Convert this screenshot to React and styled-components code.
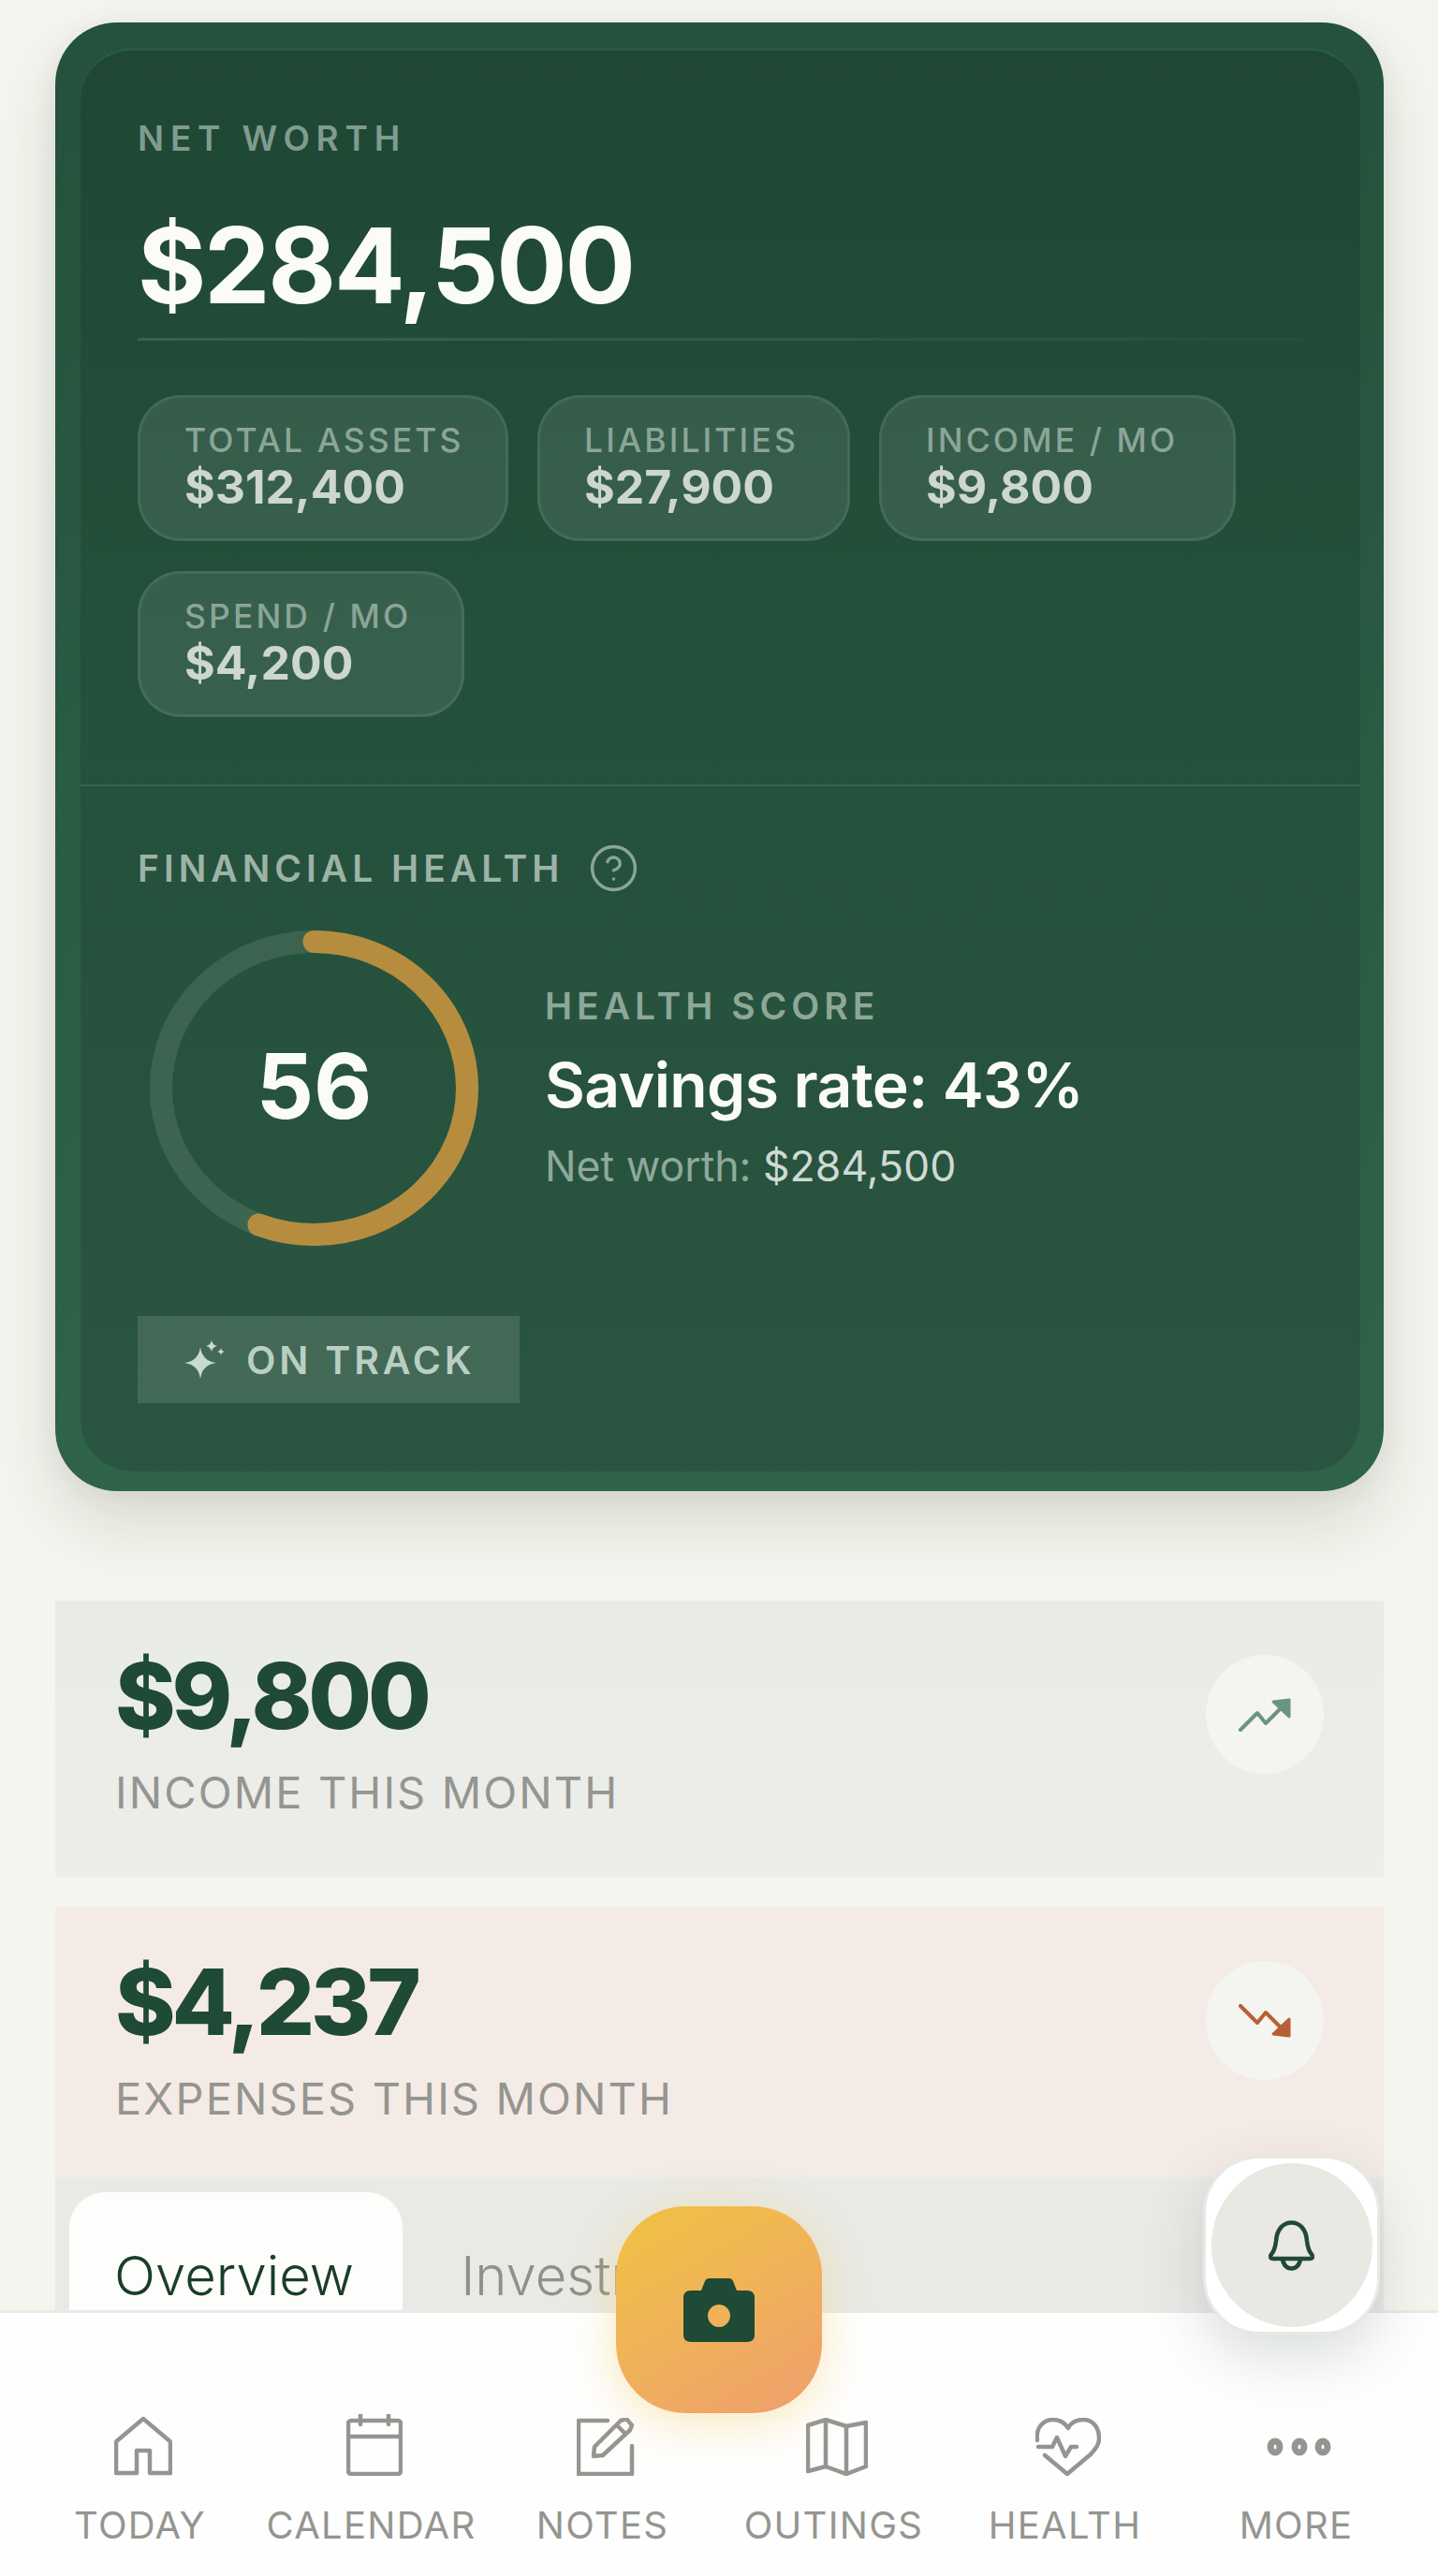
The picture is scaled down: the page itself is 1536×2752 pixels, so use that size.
import React from "react";
import styled, { createGlobalStyle } from "styled-components";
import { CircleHelp } from "lucide-react";

const GlobalStyle = createGlobalStyle`
	html, body {
		margin: 0;
		padding: 0;
		background: #f5f5ef;
	}
	* {
		box-sizing: border-box;
	}
`;

const Page = styled.div`
	position: relative;
	width: 1536px;
	height: 2752px;
	overflow: hidden;
	padding: 24px 58px 0 59px;
	background: #f5f5ef;
	font-family: Inter, "Liberation Sans", sans-serif;
`;

const HeroCard = styled.section`
	border-radius: 66px;
	padding: 27px 25px 21px 27px;
	background: linear-gradient(180deg, #24523c 0%, #2f634a 100%);
	box-shadow: 0 34px 70px rgba(40, 40, 30, 0.13), 0 4px 30px rgba(40, 40, 30, 0.06);
`;

const InnerPanel = styled.div`
	border-radius: 56px;
	border-top: 3px solid #2a5a43;
	background: linear-gradient(180deg, #1f4734 0%, #23503a 40%, #27533e 70%, #2a5540 100%);
`;

const SummaryBlock = styled.div`
	padding: 71px 63px 72px 61px;
`;

const Overline = styled.div`
	font-size: 37px;
	line-height: 46px;
	font-weight: 600;
	letter-spacing: 6.8px;
	color: #7f9c8e;
`;

const NetWorth = styled.div`
	margin-top: 47px;
	font-size: 112px;
	line-height: 130px;
	font-weight: 750;
	letter-spacing: -2.3px;
	color: #fbfcf9;
`;

const Rule = styled.div`
	height: 3px;
	margin-top: 13px;
	background: linear-gradient(90deg, #346450 0%, #2c5a45 60%, #274f3c 100%);
`;

const ChipWrap = styled.div`
	display: flex;
	flex-wrap: wrap;
	gap: 32px 31px;
	margin-top: 58px;
`;

const Chip = styled.div`
	display: flex;
	flex-direction: column;
	justify-content: center;
	width: ${({ $width }) => $width}px;
	height: 156px;
	padding: 0 0 0 47px;
	border: 3px solid rgba(255, 255, 255, 0.075);
	border-radius: 46px;
	background: rgba(255, 255, 255, 0.095);
`;

const ChipLabel = styled.div`
	font-size: 35.5px;
	line-height: 40px;
	font-weight: 500;
	letter-spacing: 3.1px;
	color: #8ba598;
	white-space: nowrap;
`;

const ChipValue = styled.div`
	font-size: 50px;
	line-height: 58px;
	font-weight: 700;
	color: #cdd6d0;
	white-space: nowrap;
`;

const HealthBlock = styled.div`
	padding: 64px 61px 73px 61px;
	border-top: 2px solid #35634d;
`;

const HealthHeading = styled.div`
	display: flex;
	align-items: center;
	gap: 26px;
	height: 46px;
	font-size: 39px;
	font-weight: 600;
	letter-spacing: 5px;
	color: #9db3a7;
	svg {
		color: #8ba598;
	}
`;

const ScoreRow = styled.div`
	display: flex;
	align-items: center;
	gap: 71px;
	margin: 44px 0 0 13px;
`;

const RingWrap = styled.div`
	position: relative;
	flex: none;
	width: 351px;
	height: 337px;
`;

const RingValue = styled.div`
	position: absolute;
	inset: 0;
	display: flex;
	align-items: center;
	justify-content: center;
	padding-bottom: 5px;
	font-size: 96px;
	font-weight: 700;
	color: #fbfcf9;
`;

const ScoreText = styled.div`
	display: flex;
	flex-direction: column;
	padding-top: 3px;
`;

const ScoreLabel = styled.div`
	font-size: 39px;
	line-height: 46px;
	font-weight: 600;
	letter-spacing: 5px;
	color: #8da798;
`;

const ScoreTitle = styled.div`
	margin-top: 16px;
	font-size: 66px;
	line-height: 90px;
	font-weight: 600;
	letter-spacing: -0.6px;
	color: #fbfcf9;
`;

const ScoreNote = styled.div`
	margin-top: 12px;
	font-size: 44.6px;
	line-height: 60px;
	font-weight: 400;
	color: #8fa99c;
	b {
		font-weight: 400;
		color: #cfdad3;
	}
`;

const TrackBadge = styled.div`
	display: inline-flex;
	align-items: center;
	gap: 22px;
	width: 408px;
	height: 93px;
	margin-top: 75px;
	padding: 0 0 0 50px;
	background: rgba(255, 255, 255, 0.12);
	font-size: 41px;
	font-weight: 600;
	letter-spacing: 3.8px;
	color: #b9cfc3;
`;

const StatCard = styled.section`
	display: flex;
	justify-content: space-between;
	align-items: flex-start;
	height: ${({ $height }) => $height}px;
	margin-top: ${({ $gap }) => $gap}px;
	padding: 42px 64px 0 64px;
	background: ${({ $tint }) => $tint};
`;

const StatValue = styled.div`
	font-size: 98px;
	line-height: 120px;
	font-weight: 760;
	letter-spacing: -4.2px;
	color: #1f4a35;
`;

const StatLabel = styled.div`
	margin-top: 13px;
	font-size: 47px;
	line-height: 60px;
	font-weight: 400;
	letter-spacing: 2.1px;
	color: #959590;
`;

const StatIcon = styled.div`
	display: flex;
	align-items: center;
	justify-content: center;
	width: 126px;
	height: 127px;
	margin-top: 16px;
	border-radius: 50%;
	background: #f4f4f0;
`;

const TabBar = styled.div`
	display: flex;
	gap: 14px;
	height: 160px;
	padding: 16px 0 0 15px;
	background: #e9eae6;
`;

const Tab = styled.div`
	height: 160px;
	padding: 53px 52px 0 48px;
	border-radius: 38px 38px 0 0;
	background: ${({ $active }) => ($active ? "#fdfdfc" : "transparent")};
	font-size: 58px;
	line-height: 72px;
	font-weight: 300;
	color: ${({ $active }) => ($active ? "#1a3c2c" : "#8f8f8b")};
`;

const BottomNav = styled.nav`
	position: absolute;
	left: 0;
	right: 0;
	bottom: 0;
	display: grid;
	grid-template-columns: repeat(6, 247px);
	height: 284px;
	padding: 106px 0 0 26px;
	border-top: 3px solid #e9e9e6;
	background: #fefefe;
`;

const NavItem = styled.div`
	display: flex;
	flex-direction: column;
	align-items: center;
	color: #959590;
`;

const NavIconBox = styled.div`
	display: flex;
	align-items: flex-end;
	justify-content: center;
	height: 68px;
	margin-left: 6px;
`;

const NavLabel = styled.div`
	margin-top: 28px;
	font-size: 40px;
	line-height: 50px;
	font-weight: 400;
	letter-spacing: 1.3px;
`;

const CameraButton = styled.button`
	position: absolute;
	left: 658px;
	top: 2357px;
	display: flex;
	align-items: center;
	justify-content: center;
	width: 220px;
	height: 221px;
	padding: 0;
	border: 0;
	border-radius: 74px;
	background: linear-gradient(150deg, #f1c243 0%, #f0b259 50%, #ef9e6e 100%);
	box-shadow: 0 10px 50px rgba(245, 200, 90, 0.4);
`;

const BellFrame = styled.button`
	position: absolute;
	left: 1285px;
	top: 2303px;
	display: flex;
	align-items: center;
	justify-content: center;
	width: 189px;
	height: 191px;
	padding: 0;
	border: 3px solid #e8e8e4;
	border-radius: 60px;
	background: #fff;
	box-shadow: 0 24px 60px rgba(60, 75, 85, 0.18);
`;

const BellDisc = styled.div`
	display: flex;
	align-items: center;
	justify-content: center;
	width: 172px;
	height: 175px;
	border-radius: 50%;
	background: #e9e8e2;
`;

function ScoreRing({ value }) {
	return (
		<RingWrap>
			<svg width="351" height="337" viewBox="0 0 351 337" fill="none">
				<ellipse cx="175.5" cy="168.5" rx="163.5" ry="156.5" stroke="rgba(255,255,255,0.1)" strokeWidth="24" />
				<path
					d="M175.5 12A163.5 156.5 0 0 1 175.5 325A163.5 156.5 0 0 1 175.5 12"
					pathLength="100"
					stroke="#b68d3f"
					strokeWidth="24"
					strokeLinecap="round"
					strokeDasharray={`${value} 100`}
				/>
			</svg>
			<RingValue>{value}</RingValue>
		</RingWrap>
	);
}

const Sparkle = () => (
	<svg width="44" height="42" viewBox="0 0 44 42" fill="#c9dad0">
		<path d="M17 7Q19 22 34 24Q19 26 17 41Q15 26 0 24Q15 22 17 7Z" />
		<path d="M29 0Q30 5 35 6Q30 7 29 12Q28 7 23 6Q28 5 29 0Z" />
		<path d="M39 8Q39.500 11.500 43 12Q39.500 12.500 39 16Q38.500 12.500 35 12Q38.500 11.500 39 8Z" />
	</svg>
);

const TrendIcon = ({ color, down }) => (
	<svg width="56" height="36" viewBox="0 0 56 36" fill="none" style={down ? { transform: "scaleY(-1)" } : undefined}>
		<path d="M2 34L20 16L29 27L45 11" stroke={color} strokeWidth="4" strokeLinecap="round" strokeLinejoin="round" />
		<path d="M37 4L54 2V20Z" fill={color} stroke={color} strokeWidth="3" strokeLinejoin="round" />
	</svg>
);

const CameraGlyph = () => (
	<svg width="76" height="68" viewBox="0 0 76 68">
		<path
			fillRule="evenodd"
			fill="#1f4a35"
			d="M8 13H19L23 3Q24 0 28 0H48Q52 0 53 3L57 13H68Q76 13 76 21V60Q76 68 68 68H8Q0 68 0 60V21Q0 13 8 13ZM38 28A12 12 0 1 0 38.010 28Z"
		/>
	</svg>
);

const BellGlyph = () => (
	<svg width="49" height="54" viewBox="0 0 49 54" fill="none" stroke="#1f4a35" strokeWidth="4.500" strokeLinejoin="round" strokeLinecap="round">
		<path d="M5 41H44Q48 41 46.500 37Q42 32 41 22C40 9 33 2.500 24.500 2.500C16 2.500 9 9 8 22Q7 32 2.500 37Q1 41 5 41Z" />
		<path d="M15 41C16 55 33 55 34 41" />
	</svg>
);

const navStroke = {
	fill: "none",
	stroke: "currentColor",
	strokeWidth: 4.5,
	strokeLinecap: "round",
	strokeLinejoin: "round",
};

const HomeGlyph = () => (
	<svg width="62" height="64" viewBox="0 0 62 64" {...navStroke}>
		<path d="M31 3L2.500 27Q2 28 2 30V61H24V37H38V61H60V30Q60 28 59.500 27Z" />
	</svg>
);

const CalendarGlyph = () => (
	<svg width="60" height="66" viewBox="0 0 60 66" {...navStroke}>
		<rect x="2" y="7" width="56" height="57" rx="3" />
		<path d="M2 24H58M15 1V11M45 1V11" />
	</svg>
);

const NotesGlyph = () => (
	<svg width="62" height="62" viewBox="0 0 62 62" {...navStroke}>
		<path d="M33 3H2V60H59V30" />
		<path d="M18 41L19 31L47 3L53 1L59 8L57 13L28 40Z" />
		<path d="M43 8L52 17" />
	</svg>
);

const MapGlyph = () => (
	<svg width="66" height="62" viewBox="0 0 66 62" {...navStroke}>
		<path d="M2 8L21 2L43 9L64 5V52L43 60L21 52L2 57Z" />
		<path d="M21 2V52M43 9V60" />
	</svg>
);

const HeartGlyph = () => (
	<svg width="70" height="62" viewBox="0 0 70 62" {...navStroke}>
		<path d="M2 24C0 11 8 2 19 2C26 2 31 5 35 11C38 5 44 2 51 2C62 2 68 11 68 22C68 29 64 33 59 39L34 60L10 40" />
		<path d="M3 31H18L23 21L32 41L38 31H44" />
	</svg>
);

const DotsGlyph = () => (
	<svg width="70" height="20" viewBox="0 0 70 20" fill="none" stroke="currentColor" strokeWidth="7" style={{ marginBottom: 21 }}>
		<ellipse cx="9" cy="10" rx="5" ry="6" />
		<ellipse cx="35" cy="10" rx="5" ry="6" />
		<ellipse cx="60" cy="10" rx="5" ry="6" />
	</svg>
);

const chips = [
	["TOTAL ASSETS", "$312,400", 396],
	["LIABILITIES", "$27,900", 334],
	["INCOME / MO", "$9,800", 381],
	["SPEND / MO", "$4,200", 349],
];

const navItems = [
	["TODAY", HomeGlyph],
	["CALENDAR", CalendarGlyph],
	["NOTES", NotesGlyph],
	["OUTINGS", MapGlyph],
	["HEALTH", HeartGlyph],
	["MORE", DotsGlyph],
];

export default function App() {
	return (
		<Page>
			<GlobalStyle />
			<HeroCard>
				<InnerPanel>
					<SummaryBlock>
						<Overline>NET WORTH</Overline>
						<NetWorth>$284,500</NetWorth>
						<Rule />
						<ChipWrap>
							{chips.map(([label, value, width]) => (
								<Chip key={label} $width={width}>
									<ChipLabel>{label}</ChipLabel>
									<ChipValue>{value}</ChipValue>
								</Chip>
							))}
						</ChipWrap>
					</SummaryBlock>
					<HealthBlock>
						<HealthHeading>
							FINANCIAL HEALTH
							<CircleHelp size={55} strokeWidth={1.5} />
						</HealthHeading>
						<ScoreRow>
							<ScoreRing value={56} />
							<ScoreText>
								<ScoreLabel>HEALTH SCORE</ScoreLabel>
								<ScoreTitle>Savings rate: 43%</ScoreTitle>
								<ScoreNote>
									Net worth: <b>$284,500</b>
								</ScoreNote>
							</ScoreText>
						</ScoreRow>
						<TrackBadge>
							<Sparkle />
							ON TRACK
						</TrackBadge>
					</HealthBlock>
				</InnerPanel>
			</HeroCard>

			<StatCard $height={296} $gap={117} $tint="linear-gradient(180deg, #e9ebe7 0%, #edeeea 100%)">
				<div>
					<StatValue>$9,800</StatValue>
					<StatLabel>INCOME THIS MONTH</StatLabel>
				</div>
				<StatIcon>
					<TrendIcon color="#6b9480" />
				</StatIcon>
			</StatCard>
			<StatCard $height={289} $gap={31} $tint="#f4ebe6">
				<div>
					<StatValue>$4,237</StatValue>
					<StatLabel>EXPENSES THIS MONTH</StatLabel>
				</div>
				<StatIcon>
					<TrendIcon color="#b85f36" down />
				</StatIcon>
			</StatCard>
			<TabBar>
				<Tab $active>Overview</Tab>
				<Tab>Investments</Tab>
			</TabBar>

			<BottomNav>
				{navItems.map(([label, Glyph]) => (
					<NavItem key={label}>
						<NavIconBox>
							<Glyph />
						</NavIconBox>
						<NavLabel>{label}</NavLabel>
					</NavItem>
				))}
			</BottomNav>
			<CameraButton>
				<CameraGlyph />
			</CameraButton>
			<BellFrame>
				<BellDisc>
					<BellGlyph />
				</BellDisc>
			</BellFrame>
		</Page>
	);
}
